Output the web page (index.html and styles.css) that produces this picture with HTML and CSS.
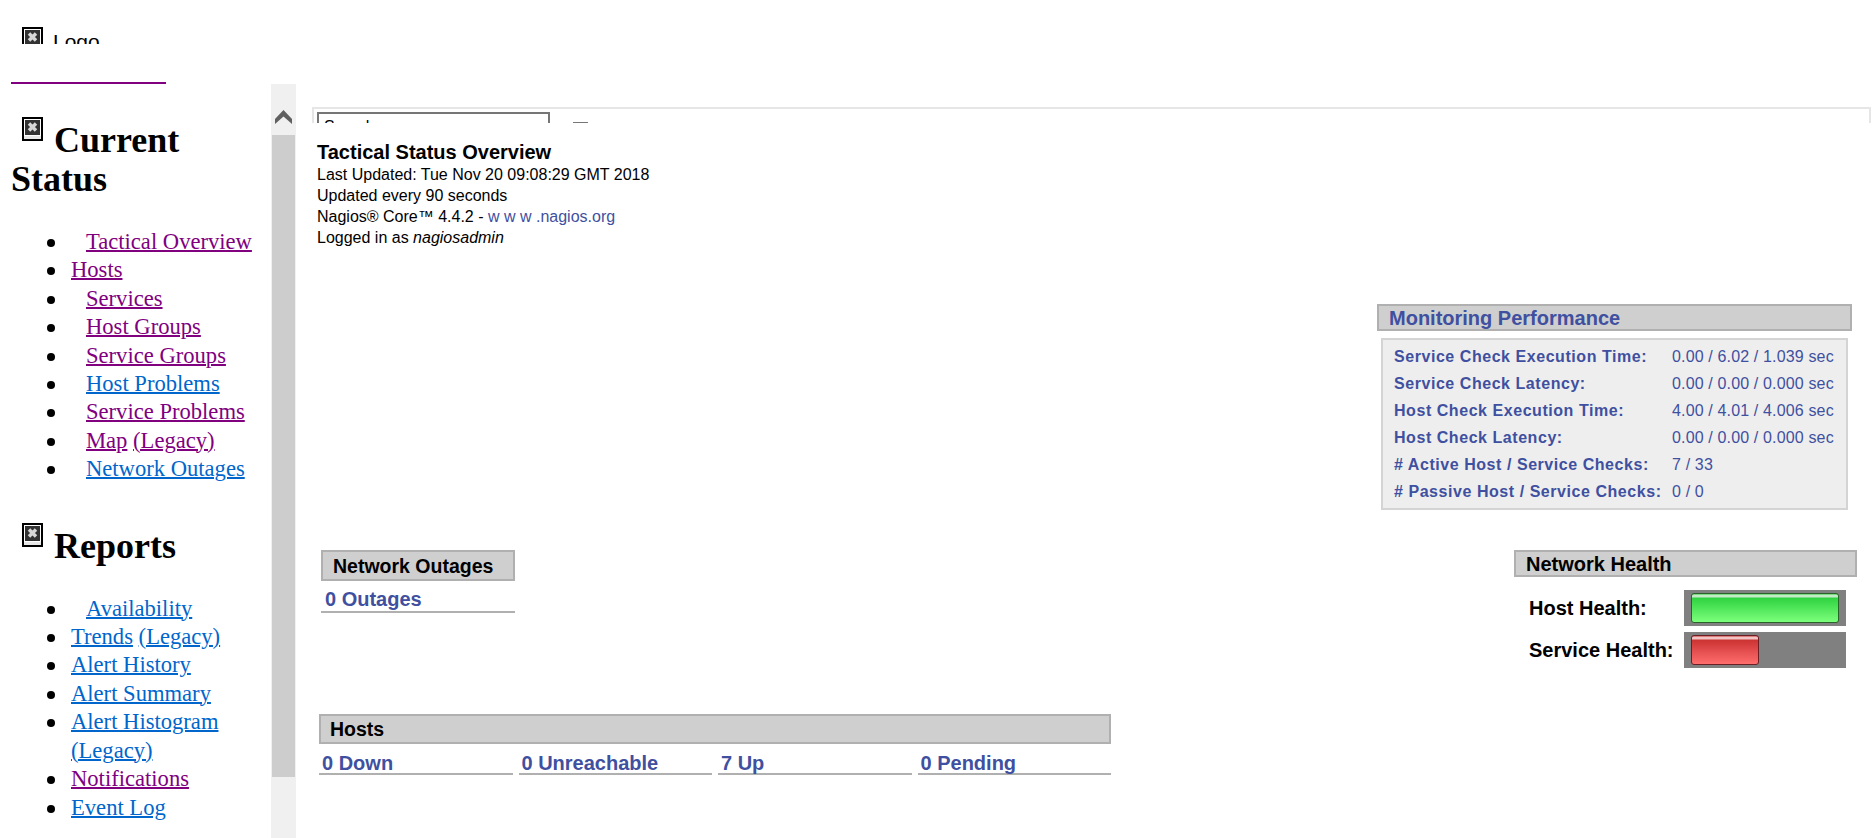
FILE: index.html
```html
<!DOCTYPE html>
<html lang="en">
<head>
<meta charset="utf-8">
<title>Nagios Core</title>
<link rel="stylesheet" href="styles.css">
</head>
<body>
<svg class="defs" width="0" height="0" aria-hidden="true">
  <symbol id="broken" viewBox="0 0 21 24">
    <rect x="1" y="1" width="19" height="22" fill="#fff" stroke="#000" stroke-width="2"/>
    <rect x="3" y="3" width="15" height="15" fill="#333"/>
    <path d="M7 6.5l7 7M14 6.5l-7 7" stroke="#d8d8d8" stroke-width="3.5"/>
    <rect x="2" y="19" width="17" height="3" fill="#e8e8e8"/>
  </symbol>
</svg>
<header class="topbar">
  <div class="logo-clip">
    <svg class="broken"><use href="#broken"/></svg>
    <span class="logo-text">Logo</span>
  </div>
  <div class="rule"></div>
</header>
<div class="frames">
  <nav class="side">
    <div class="side-scroll">
      <h2 class="nav-title nav-first"><svg class="broken"><use href="#broken"/></svg>Current Status</h2>
      <ul class="nav-list list-first">
        <li class="ind"><a class="v" href="#">Tactical Overview</a></li>
        <li><a class="v" href="#">Hosts</a></li>
        <li class="ind"><a class="v" href="#">Services</a></li>
        <li class="ind"><a class="v" href="#">Host Groups</a></li>
        <li class="ind"><a class="v" href="#">Service Groups</a></li>
        <li class="ind"><a class="u" href="#">Host Problems</a></li>
        <li class="ind"><a class="v" href="#">Service Problems</a></li>
        <li class="ind"><span><a class="v" href="#">Map</a> <a class="v" href="#">(Legacy)</a></span></li>
        <li class="ind"><a class="u" href="#">Network Outages</a></li>
      </ul>
      <h2 class="nav-title nav-second"><svg class="broken"><use href="#broken"/></svg>Reports</h2>
      <ul class="nav-list list-second">
        <li class="ind"><a class="u" href="#">Availability</a></li>
        <li><span><a class="u" href="#">Trends</a> <a class="u" href="#">(Legacy)</a></span></li>
        <li><a class="u" href="#">Alert History</a></li>
        <li><a class="u" href="#">Alert Summary</a></li>
        <li><span><a class="u" href="#">Alert Histogram</a> <a class="u" href="#">(Legacy)</a></span></li>
        <li><a class="v" href="#">Notifications</a></li>
        <li><a class="u" href="#">Event Log</a></li>
      </ul>
    </div>
    <div class="scrollbar">
      <div class="arrow">
        <svg width="17" height="14" viewBox="0 0 17 14"><path d="M8.5 0L17 9v5L8.5 6.5 0 14V9z" fill="#606060"/></svg>
      </div>
      <div class="thumb"></div>
    </div>
  </nav>
  <main class="main">
    <div class="search-strip">
      <div class="search-box">Search</div>
      <div class="search-icon"></div>
    </div>
    <section class="info">
      <h1 class="info-title">Tactical Status Overview</h1>
      <p>Last Updated: Tue Nov 20 09:08:29 GMT 2018</p>
      <p>Updated every 90 seconds</p>
      <p>Nagios® Core™ 4.4.2 - <a class="plain" href="#">w w w .nagios.org</a></p>
      <p>Logged in as <i>nagiosadmin</i></p>
    </section>
    <section class="perf-row">
      <div class="perf">
        <div class="panel-head perf-head">Monitoring Performance</div>
        <table class="perf-body">
          <tr><th>Service Check Execution Time:</th><td>0.00 / 6.02 / 1.039 sec</td></tr>
          <tr><th>Service Check Latency:</th><td>0.00 / 0.00 / 0.000 sec</td></tr>
          <tr><th>Host Check Execution Time:</th><td>4.00 / 4.01 / 4.006 sec</td></tr>
          <tr><th>Host Check Latency:</th><td>0.00 / 0.00 / 0.000 sec</td></tr>
          <tr><th># Active Host / Service Checks:</th><td>7 / 33</td></tr>
          <tr><th># Passive Host / Service Checks:</th><td>0 / 0</td></tr>
        </table>
      </div>
    </section>
    <section class="mid-row">
      <div class="outages">
        <div class="panel-head outages-head">Network Outages</div>
        <a class="stat outages-stat" href="#">0 Outages</a>
      </div>
      <div class="health">
        <div class="panel-head health-head">Network Health</div>
        <div class="health-line">
          <span class="health-label">Host Health:</span>
          <div class="meter"><div class="fill fill-good"></div></div>
        </div>
        <div class="health-line">
          <span class="health-label">Service Health:</span>
          <div class="meter"><div class="fill fill-bad"></div></div>
        </div>
      </div>
    </section>
    <section class="hosts">
      <div class="panel-head hosts-head">Hosts</div>
      <div class="hosts-grid">
        <a class="stat" href="#">0 Down</a>
        <a class="stat" href="#">0 Unreachable</a>
        <a class="stat" href="#">7 Up</a>
        <a class="stat" href="#">0 Pending</a>
      </div>
    </section>
  </main>
</div>
</body>
</html>
```
FILE: styles.css
```css
html, body {
  margin: 0;
  padding: 0;
  height: 838px;
  overflow: hidden;
  background: #fff;
  color: #000;
}
.defs { position: absolute; }
.broken { width: 21px; height: 24px; }

.topbar { height: 84px; }
.logo-clip {
  height: 44px;
  overflow: hidden;
  padding: 27px 0 0 22px;
  box-sizing: border-box;
  display: flex;
  font: 21px/1 "Liberation Sans", sans-serif;
}
.logo-text { margin-left: 10px; padding-top: 4px; }
.rule { width: 155px; height: 2px; margin: 38px 0 0 11px; background: #800080; }

.frames { display: flex; height: 754px; }
.side { width: 296px; flex: none; display: flex; }
.side-scroll {
  width: 271px;
  flex: none;
  overflow: hidden;
  box-sizing: border-box;
  padding-left: 11px;
  font-family: "Liberation Serif", serif;
}
.nav-title {
  margin: 0;
  font-size: 36px;
  line-height: 39px;
  font-weight: bold;
}
.nav-first { margin-top: 33px; }
.nav-second { margin-top: 39px; }
.nav-title .broken { margin: 0 11px 0 11px; vertical-align: 11px; }
.nav-list {
  list-style: none;
  margin: 0;
  padding: 0 0 0 36px;
  font-size: 22.6px;
  line-height: 28.4px;
}
.list-first { margin-top: 29px; }
.list-second { margin-top: 29px; }
.nav-list li { display: flex; }
.nav-list li::before {
  content: "";
  flex: none;
  width: 8px;
  height: 8px;
  margin: 11px 16px 0 0;
  border-radius: 50%;
  background: #000;
}
.nav-list li.ind > :first-child { margin-left: 15px; }
.nav-list a { text-decoration-thickness: 2px; }
.v { color: #800080; }
.u { color: #0066cc; }

.scrollbar {
  width: 25px;
  flex: none;
  display: flex;
  flex-direction: column;
  background: #f0f0f0;
}
.arrow {
  height: 51px;
  flex: none;
  display: flex;
  justify-content: center;
  align-items: flex-start;
  padding-top: 26px;
  box-sizing: border-box;
}
.thumb { height: 642px; margin: 0 1px; background: #cdcdcd; }

.main {
  flex: 1;
  min-width: 0;
  font-family: "Liberation Sans", sans-serif;
  padding-right: 2px;
}
.search-strip {
  height: 16px;
  margin: 23px 0 0 16px;
  overflow: hidden;
  border: solid #e6e6e6;
  border-width: 2px 2px 0 2px;
  box-sizing: border-box;
  display: flex;
  padding: 3px 0 0 3px;
  gap: 23px;
}
.search-box {
  width: 233px;
  height: 24px;
  flex: none;
  box-sizing: border-box;
  border: 2px solid #767676;
  padding: 4px 5px 0;
  font-size: 16px;
}
.search-icon {
  width: 15px;
  height: 10px;
  margin-top: 10px;
  border: 1px solid #777;
  box-sizing: border-box;
}

.info { margin: 18px 0 0 21px; font-size: 16px; line-height: 21px; }
.info p { margin: 0; }
.info-title { margin: 0 0 1px; font-size: 20px; line-height: 22px; font-weight: bold; }
.plain { color: #3f50a0; text-decoration: none; }

.panel-head {
  box-sizing: border-box;
  background: #cfcfcf;
  border: 2px solid #b0b0b0;
  font-weight: bold;
}
.perf-row { display: flex; justify-content: flex-end; padding: 56px 19px 0 0; }
.perf { width: 475px; }
.perf-head {
  height: 27px;
  padding-left: 10px;
  font-size: 20px;
  line-height: 25px;
  color: #3f50a0;
}
.perf-body {
  box-sizing: border-box;
  width: 467px;
  height: 172px;
  margin: 7px 0 0 4px;
  background: #eee;
  border: 2px solid #d4d4d4;
  border-collapse: separate;
  border-spacing: 0;
  padding: 3px 0 3px 11px;
  color: #3f50a0;
  font-size: 16px;
}
.perf-body tr { height: 27px; }
.perf-body th { text-align: left; padding: 0; width: 278px; letter-spacing: .55px; }
.perf-body td { padding: 0; letter-spacing: .15px; }

.mid-row {
  display: flex;
  justify-content: space-between;
  align-items: flex-start;
  padding: 40px 14px 0 25px;
}
.outages { width: 194px; }
.outages-head { height: 31px; padding-left: 10px; font-size: 19.5px; line-height: 28px; }
.stat {
  display: block;
  box-sizing: border-box;
  color: #3f50a0;
  font-weight: bold;
  font-size: 20px;
  text-decoration: none;
  border-bottom: 2px solid #b0b0b0;
}
.outages-stat { height: 32px; padding: 6px 0 0 4px; line-height: 24px; }
.health { width: 343px; }
.health-head { height: 27px; padding-left: 10px; font-size: 20px; line-height: 25px; }
.health-line {
  display: flex;
  align-items: center;
  justify-content: space-between;
  padding: 0 11px 0 15px;
  margin-top: 6px;
  font-size: 20px;
  font-weight: bold;
}
.health-head + .health-line { margin-top: 13px; }
.meter {
  width: 162px;
  height: 36px;
  box-sizing: border-box;
  padding: 3px 7px;
  background: #808080;
}
.fill { height: 30px; box-sizing: border-box; border-radius: 3px; }
.fill-good {
  width: 100%;
  border: 1px solid #2a632a;
  background: linear-gradient(#2ecb3e 0, #c4e9c6 1px, #c4e9c6 3px, #2fd341 4px, #7cff7c 100%);
}
.fill-bad {
  width: 68px;
  border: 1px solid #6b1f25;
  background: linear-gradient(#cc3333 0, #f0c4c4 1px, #f0c4c4 3px, #cc3333 4px, #ff6d6d 100%);
}

.hosts { width: 792px; margin: 0 0 0 23px; padding-top: 46px; }
.hosts-head { height: 30px; padding-left: 9px; font-size: 19.5px; line-height: 26px; }
.hosts-grid {
  display: grid;
  grid-template-columns: repeat(4, 1fr);
  gap: 6px;
  margin-top: 0;
}
.hosts-grid .stat { height: 31px; padding: 8px 0 0 3px; line-height: 22px; }
```
